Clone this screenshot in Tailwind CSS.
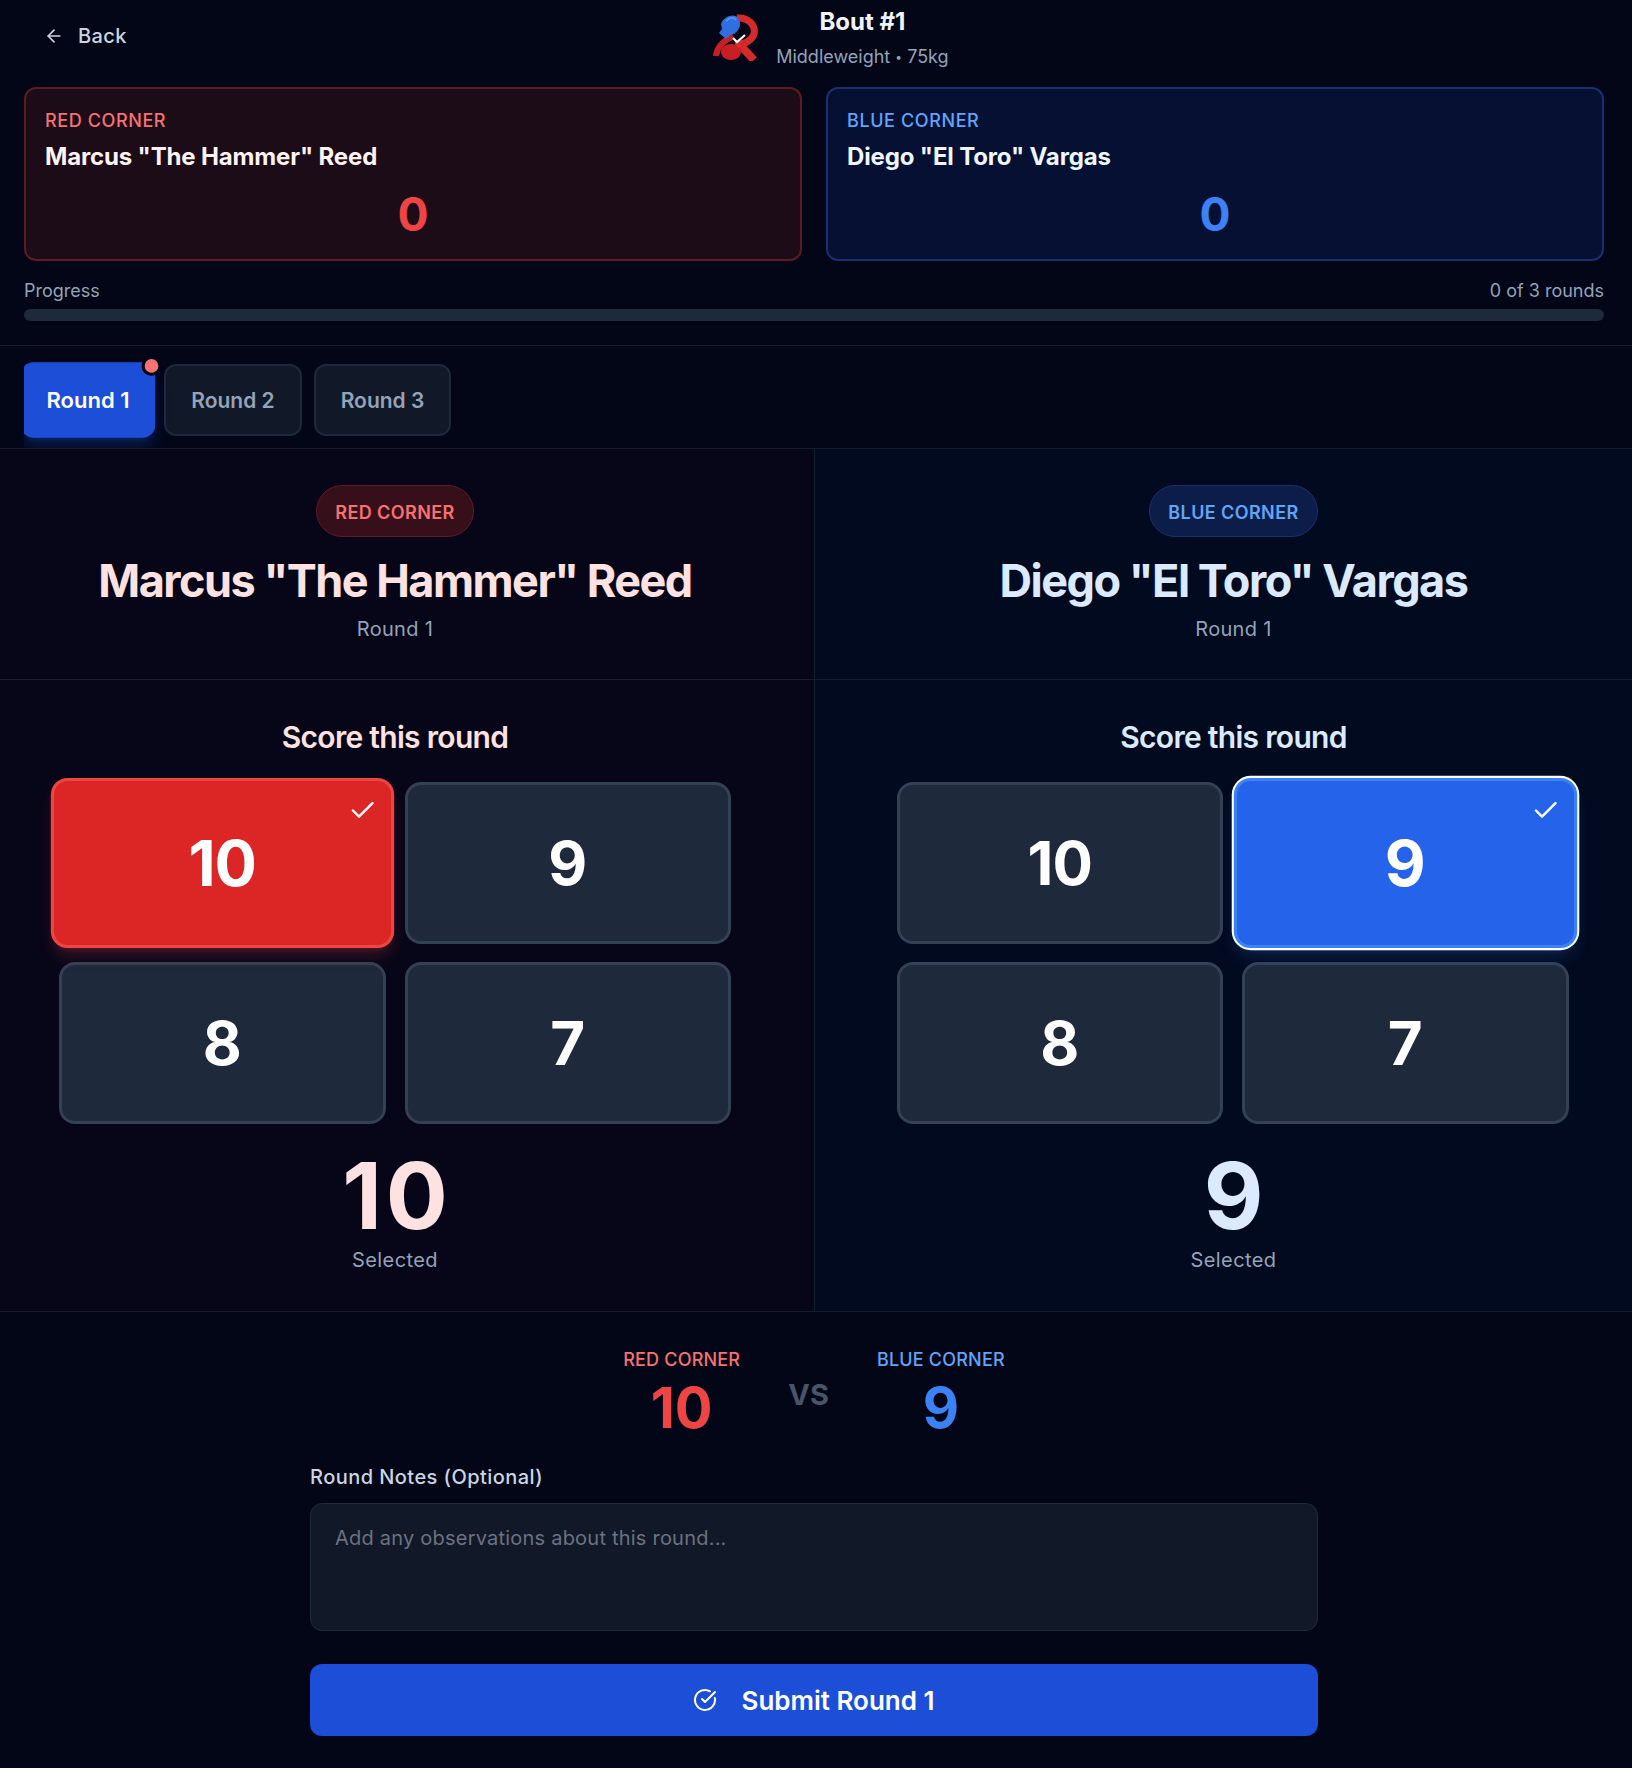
<!DOCTYPE html>
<html lang="en">
<head>
  <meta charset="UTF-8">
  <title>Bout #1</title>
  <script src="https://cdn.jsdelivr.net/npm/@tailwindcss/browser@4"></script>
</head>
<body class="bg-[#020617] text-white font-['Inter',sans-serif] w-[1632px] h-[1768px] overflow-hidden">
  <!-- Header -->
  <header class="pl-6 pr-7 h-[346px] border-b border-[#1e293b]/70">
    <div class="flex h-[87px]">
      <a class="flex items-center gap-[14px] text-[#cbd5e1] text-xl tracking-[0.4px] font-medium h-[72px] pl-5">
        <svg class="w-5 h-5" viewBox="0 0 24 24" fill="none" stroke="currentColor" stroke-width="2" stroke-linecap="round" stroke-linejoin="round"><path d="M19 12H5"/><path d="M12 19l-7-7 7-7"/></svg>
        Back
      </a>
      <div class="flex-1 flex justify-center pr-[72px]">
        <div class="flex gap-[15px] pt-[13px] pl-[3px]">
          <!-- logo: gloves wrapped round an R -->
          <svg class="w-[48px] h-[47px] mt-px" viewBox="8 4 48 47" fill="none">
            <path d="M32 8C44 7 51 16 49 24C47 31 39 34 30 35" stroke="#d42a2a" stroke-width="7"/>
            <path d="M36 36L49 50" stroke="#d42a2a" stroke-width="8"/>
            <path d="M28 26C20 30 12 36 11 46" stroke="#c81f26" stroke-width="6"/>
            <ellipse cx="26" cy="42" rx="10" ry="8" fill="#c81f26"/>
            <ellipse cx="35" cy="35" rx="4" ry="3" fill="#d42a2a"/>
            <path d="M16 14C19 6 29 3 33 8C37 13 35 20 29 24L25 25L21 29L14 23L17 19Z" fill="#2f6fe0"/>
            <path d="M21 11C25 7 29 7 31 10" stroke="#5b93ee" stroke-width="2"/>
            <path d="M28 28L32 32L40 25" stroke="#fff" stroke-width="2.2"/>
          </svg>
          <div class="text-center">
            <div class="text-2xl font-bold text-[#f1f5f9] leading-[32px] -mt-[7px]">Bout #1</div>
            <div class="text-lg text-[#94a3b8] mt-[5px]">Middleweight <span class="text-[12px] align-[2px]">•</span> 75kg</div>
          </div>
        </div>
      </div>
    </div>

    <div class="grid grid-cols-2 gap-6">
      <div class="h-[174px] rounded-xl border-2 border-[#5f1a22] bg-[#1b0c18] px-[19px] pt-[18px]">
        <div class="text-lg font-medium text-[#f87171] tracking-[0.6px]">RED CORNER</div>
        <div class="text-2xl font-bold tracking-[-0.15px] text-[#fef2f2] mt-[6px]">Marcus "The Hammer" Reed</div>
        <div class="text-center text-[46px] leading-[48px] font-bold text-[#ef4444] mt-[17px]">0</div>
      </div>
      <div class="h-[174px] rounded-xl border-2 border-[#1a2f70] bg-[#061033] px-[19px] pt-[18px]">
        <div class="text-lg font-medium text-[#60a5fa] tracking-[0.6px]">BLUE CORNER</div>
        <div class="text-2xl font-bold tracking-[-0.15px] text-[#eff6ff] mt-[6px]">Diego "El Toro" Vargas</div>
        <div class="text-center text-[46px] leading-[48px] font-bold text-[#3b82f6] mt-[17px]">0</div>
      </div>
    </div>

    <div class="flex justify-between text-lg text-[#94a3b8] mt-[16px]">
      <span>Progress</span><span>0 of 3 rounds</span>
    </div>
    <div class="h-3 rounded-full bg-[#1e293b] mt-[4px]"></div>
  </header>

  <!-- Round tabs -->
  <nav class="h-[103px] border-b border-[#1e293b]/70 px-6 overflow-hidden">
    <div class="flex gap-3 pt-[18px] overflow-x-clip overflow-y-visible">
      <button class="relative w-[128px] h-[72px] pt-[2px] rounded-xl bg-[#1d4ed8] text-white text-[21px] font-semibold scale-105 shadow-lg shadow-[#1d4ed8]/30">
        Round 1
        <span class="absolute -top-[3px] -right-[3px] w-[13px] h-[13px] rounded-full bg-[#f87171] ring-[3px] ring-[#020617]"></span>
      </button>
      <button class="w-[138px] h-[72px] pt-[2px] rounded-xl border-2 border-[#1e293b] bg-[#111827] text-[#94a3b8] text-[21px] font-semibold">Round 2</button>
      <button class="w-[137px] h-[72px] pt-[2px] rounded-xl border-2 border-[#1e293b] bg-[#111827] text-[#94a3b8] text-[21px] font-semibold">Round 3</button>
    </div>
  </nav>

  <!-- Score panels -->
  <main class="grid grid-cols-[815px_1fr] h-[863px] border-b border-[#1e293b]/70">
    <section class="bg-[#070618] border-r border-[#1e293b]/70">
      <div class="h-[231px] border-b border-[#1e293b]/70 pr-6 pt-[36px] flex flex-col items-center">
        <span class="px-[18px] pt-[13px] pb-[9px] rounded-full border border-[#5f1a22] bg-[#7f1d1d]/40 text-[#f87171] text-lg font-semibold tracking-[0.4px] leading-7">RED CORNER</span>
        <h2 class="text-[45px] leading-[48px] tracking-[-1.5px] font-bold text-[#fee2e2] mt-[20px]">Marcus "The Hammer" Reed</h2>
        <p class="text-xl tracking-[0.3px] text-[#94a3b8] mt-[10px]">Round 1</p>
      </div>
      <div class="pr-6 pt-[39px] flex flex-col items-center">
        <h3 class="text-3xl tracking-[-0.7px] font-semibold text-[#fee2e2]">Score this round</h3>
        <div class="grid grid-cols-2 gap-x-[19px] gap-y-[18px] w-[672px] mt-[27px]">
          <button class="relative h-[162px] rounded-2xl border-[3px] border-[#ef4444] bg-[#dc2626] text-6xl tracking-[-1px] font-bold scale-105 shadow-lg shadow-[#ef4444]/20">
            10
            <svg class="absolute top-[14px] right-[13px] w-7 h-7" viewBox="0 0 24 24" fill="none" stroke="#fff" stroke-width="2" stroke-linecap="round" stroke-linejoin="round"><path d="M20 6 9 17l-5-5"/></svg>
          </button>
          <button class="h-[162px] rounded-2xl border-[3px] border-[#334155] bg-[#1e293b] text-6xl font-bold">9</button>
          <button class="h-[162px] rounded-2xl border-[3px] border-[#334155] bg-[#1e293b] text-6xl font-bold">8</button>
          <button class="h-[162px] rounded-2xl border-[3px] border-[#334155] bg-[#1e293b] text-6xl font-bold">7</button>
        </div>
        <div class="pl-[4px] text-[92px] leading-none tracking-[4px] font-bold text-[#fee2e2] mt-[26px]">10</div>
        <div class="text-xl tracking-[0.4px] text-[#94a3b8] mt-[4px]">Selected</div>
      </div>
    </section>
    <section class="bg-[#020a20]">
      <div class="h-[231px] border-b border-[#1e293b]/70 pl-5 pt-[36px] flex flex-col items-center">
        <span class="px-[18px] pt-[13px] pb-[9px] rounded-full border border-[#1a2f70] bg-[#1e3a8a]/40 text-[#60a5fa] text-lg font-semibold tracking-[0.4px] leading-7">BLUE CORNER</span>
        <h2 class="text-[45px] leading-[48px] tracking-[-1.5px] font-bold text-[#dbeafe] mt-[20px]">Diego "El Toro" Vargas</h2>
        <p class="text-xl tracking-[0.3px] text-[#94a3b8] mt-[10px]">Round 1</p>
      </div>
      <div class="pl-5 pt-[39px] flex flex-col items-center">
        <h3 class="text-3xl tracking-[-0.7px] font-semibold text-[#dbeafe]">Score this round</h3>
        <div class="grid grid-cols-2 gap-x-[19px] gap-y-[18px] w-[672px] mt-[27px] mr-[2px]">
          <button class="h-[162px] rounded-2xl border-[3px] border-[#334155] bg-[#1e293b] text-6xl tracking-[-1px] font-bold">10</button>
          <button class="relative h-[162px] rounded-2xl border-[3px] border-[#3b82f6] bg-[#2563eb] text-6xl font-bold scale-105 ring-2 ring-white shadow-lg shadow-[#3b82f6]/20">
            9
            <svg class="absolute top-[14px] right-[13px] w-7 h-7" viewBox="0 0 24 24" fill="none" stroke="#fff" stroke-width="2" stroke-linecap="round" stroke-linejoin="round"><path d="M20 6 9 17l-5-5"/></svg>
          </button>
          <button class="h-[162px] rounded-2xl border-[3px] border-[#334155] bg-[#1e293b] text-6xl font-bold">8</button>
          <button class="h-[162px] rounded-2xl border-[3px] border-[#334155] bg-[#1e293b] text-6xl font-bold">7</button>
        </div>
        <div class="text-[92px] leading-none font-bold text-[#dbeafe] mt-[26px]">9</div>
        <div class="text-xl tracking-[0.4px] text-[#94a3b8] mt-[4px]">Selected</div>
      </div>
    </section>
  </main>

  <!-- Summary and notes -->
  <footer class="w-[1008px] ml-[310px] pt-[34px]">
    <div class="flex justify-center gap-[48px]">
      <div class="text-center">
        <div class="text-lg font-medium tracking-[0.2px] text-[#f87171]">RED CORNER</div>
        <div class="text-[56px] leading-none font-bold text-[#ef4444] mt-[6px]">10</div>
      </div>
      <div class="text-[29px] font-bold text-[#475569] pt-[27px]">VS</div>
      <div class="text-center">
        <div class="text-lg font-medium tracking-[0.2px] text-[#60a5fa]">BLUE CORNER</div>
        <div class="text-[56px] leading-none font-bold text-[#3b82f6] mt-[6px]">9</div>
      </div>
    </div>
    <label class="block text-xl tracking-[0.45px] font-medium text-[#cbd5e1] mt-[27px]">Round Notes (Optional)</label>
    <textarea class="block w-full h-32 resize-none rounded-xl border border-[#1e293b] bg-[#111827] mt-[12px] px-6 py-[20px] text-xl tracking-[0.22px] leading-7 placeholder:text-[#6b7280]" placeholder="Add any observations about this round..."></textarea>
    <button class="flex items-center justify-center gap-6 w-full h-[72px] rounded-xl bg-[#1d4ed8] text-[26px] font-semibold mt-[33px]">
      <svg class="w-6 h-6" viewBox="0 0 24 24" fill="none" stroke="currentColor" stroke-width="2" stroke-linecap="round" stroke-linejoin="round"><path d="M21.8 10A10 10 0 1 1 17 3.3"/><path d="m9 11 3 3L22 4"/></svg>
      Submit Round 1
    </button>
  </footer>
</body>
</html>
